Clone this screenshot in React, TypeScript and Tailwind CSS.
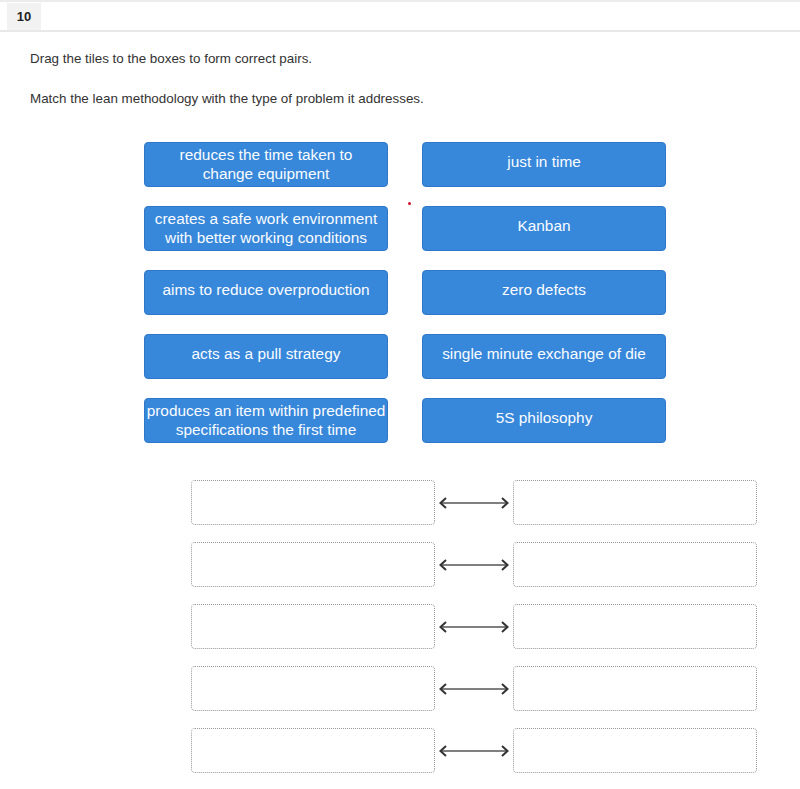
import React from "react";

const left = [
  ["reduces the time taken to", "change equipment"],
  ["creates a safe work environment", "with better working conditions"],
  ["aims to reduce overproduction"],
  ["acts as a pull strategy"],
  ["produces an item within predefined", "specifications the first time"],
];
const right = [
  ["just in time"],
  ["Kanban"],
  ["zero defects"],
  ["single minute exchange of die"],
  ["5S philosophy"],
];

function Tile({ lines }: { lines: string[] }) {
  return (
    <div
      className={
        "h-[45px] w-[244px] rounded-[4px] border border-[#2f78c8] bg-[#3787da] flex flex-col items-center justify-center text-[#fafcff] text-[15.4px] leading-[19px] text-center " +
        (lines.length > 1 ? "pb-[2px]" : "pb-[6px]")
      }
    >
      {lines.map((l, i) => (
        <div key={i}>{l}</div>
      ))}
    </div>
  );
}

function Arrow() {
  return (
    <svg width="78" height="20" viewBox="0 0 78 20">
      <line x1="6" y1="10" x2="72" y2="10" stroke="#555" strokeWidth="1.6" />
      <polyline points="11,5 5.5,10 11,15" fill="none" stroke="#333" strokeWidth="2" />
      <polyline points="67,5 72.5,10 67,15" fill="none" stroke="#333" strokeWidth="2" />
    </svg>
  );
}

export default function App() {
  return (
    <div className="w-[800px] h-[789px] bg-white relative" style={{ fontFamily: '"Liberation Sans", Arial, sans-serif' }}>
      <div className="border-t-[2px] border-[#ececec]" />
      <div className="h-[30px] border-b-[2px] border-[#e8e8e8] flex items-stretch pt-[1px] pl-[7px]">
        <div className="w-[34px] bg-[#f2f2f2] flex items-center justify-center text-[13px] font-bold text-[#222]">10</div>
      </div>
      <div className="pl-[30px] pt-[19px] text-[13.4px] text-[#333] leading-[16px]">
        <div>Drag the tiles to the boxes to form correct pairs.</div>
        <div className="mt-[24px]">Match the lean methodology with the type of problem it addresses.</div>
      </div>
      <div className="ml-[144px] mt-[35px] grid grid-cols-[244px_244px] gap-x-[34px] gap-y-[19px] w-fit">
        {left.map((l, i) => (
          <React.Fragment key={i}>
            <Tile lines={l} />
            <Tile lines={right[i]} />
          </React.Fragment>
        ))}
      </div>
      <div className="ml-[191px] mt-[37px] flex flex-col gap-[17px]">
        {[0, 1, 2, 3, 4].map((i) => (
          <div key={i} className="flex items-center">
            <div className="h-[45px] w-[244px] rounded-[4px] border border-dotted border-[#999]" />
            <div className="w-[78px] flex justify-center">
              <Arrow />
            </div>
            <div className="h-[45px] w-[244px] rounded-[4px] border border-dotted border-[#999]" />
          </div>
        ))}
      </div>
      <div className="absolute left-[408px] top-[202px] w-[3px] h-[3px] rounded-full bg-[#d01030]" />
    </div>
  );
}
